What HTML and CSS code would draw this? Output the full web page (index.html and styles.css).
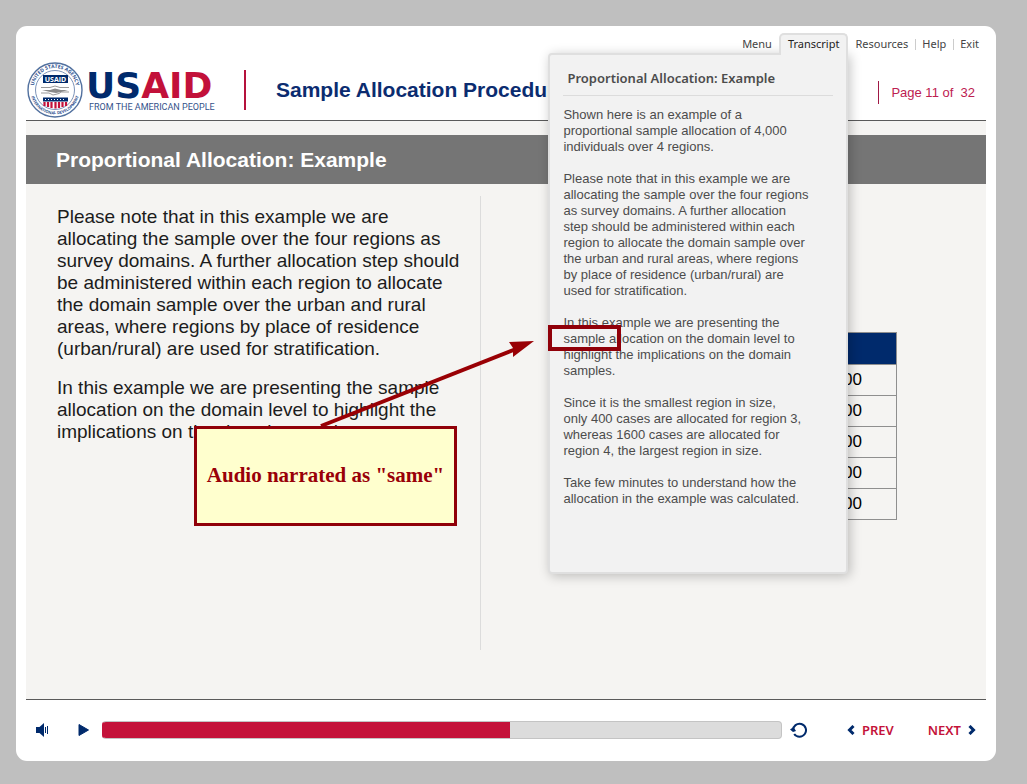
FILE: index.html
```html
<!DOCTYPE html>
<html lang="en">
<head>
<meta charset="utf-8">
<title>Sample Allocation Procedure</title>
<link rel="stylesheet" href="styles.css">
</head>
<body>
<div class="player">
  <header class="header">
    <nav class="nav">
      <button class="nav-item" type="button">Menu</button>
      <div class="tab-wrap">
        <button class="nav-item tab" type="button" aria-expanded="true" aria-controls="transcript">Transcript</button>
        <section class="transcript" id="transcript">
          <h3 class="transcript-title">Proportional Allocation: Example</h3>
          <p>Shown here is an example of a<br>proportional sample allocation of 4,000<br>individuals over 4 regions.</p>
          <p>Please note that in this example we are<br>allocating the sample over the four regions<br>as survey domains. A further allocation<br>step should be administered within each<br>region to allocate the domain sample over<br>the urban and rural areas, where regions<br>by place of residence (urban/rural) are<br>used for stratification.</p>
          <p>In this example we are presenting the<br>sample allocation on the domain level to<br>highlight the implications on the domain<br>samples.</p>
          <p>Since it is the smallest region in size,<br>only 400 cases are allocated for region 3,<br>whereas 1600 cases are allocated for<br>region 4, the largest region in size.</p>
          <p>Take few minutes to understand how the<br>allocation in the example was calculated.</p>
        </section>
      </div>
      <button class="nav-item" type="button">Resources</button>
      <button class="nav-item split" type="button">Help</button>
      <button class="nav-item split" type="button">Exit</button>
    </nav>
    <div class="masthead">
      <svg class="logo" width="190" height="58" viewBox="0 0 190 58" role="img" aria-label="USAID from the American people">
        <defs>
          <path id="ring-top" d="M7.200 33.500A21.400 21.400 0 1 1 48.800 33.500"/>
          <path id="ring-bottom" d="M4 24A24.500 24.500 0 1 0 52 24"/>
        </defs>
        <circle cx="28" cy="29" r="27" fill="#fff" stroke="#52719f" stroke-width="1.4"/>
        <circle cx="28" cy="29" r="19.500" fill="#fff" stroke="#7d93b8" stroke-width="1"/>
        <text class="seal-text"><textPath href="#ring-top" startOffset="50%" text-anchor="middle">UNITED STATES AGENCY</textPath></text>
        <text class="seal-text small"><textPath href="#ring-bottom" startOffset="50%" text-anchor="middle">INTERNATIONAL DEVELOPMENT</textPath></text>
        <rect x="16" y="14" width="25" height="8" fill="#002a6c"/>
        <text class="seal-name" x="28.500" y="20.600" text-anchor="middle">USAID</text>
        <path d="M14 26.500h9l5-1.500 5 1.500h9M14 32h8l4 2 6-1.500 2-1.500h8" fill="none" stroke="#999" stroke-width="1"/>
        <path d="M15 29h8l5-1.500 6 1.500h7l-7 2-5 1-6-1z" fill="#8a8a8a"/>
        <path d="M16 36.500h25v4H16z" fill="#002a6c"/>
        <path d="M18 38.500h21" stroke="#fff" stroke-width="1" stroke-dasharray="1 2"/>
        <path d="M17.500 41v4M21 41v5M24.500 41v6M28.500 41v6.500M32 41v6M35.500 41v5M39 41v4" stroke="#c2113a" stroke-width="2.200"/>
        <text class="word" x="59" y="37"><tspan fill="#002a6c">US</tspan><tspan fill="#c2113a">AID</tspan></text>
        <text class="tagline" x="62" y="49">FROM THE AMERICAN PEOPLE</text>
      </svg>
      <span class="rule"></span>
      <h1 class="course">Sample Allocation Procedure</h1>
      <p class="page-count">Page 11 of&nbsp; 32</p>
    </div>
  </header>

  <main class="stage">
    <h2 class="slide-title">Proportional Allocation: Example</h2>
    <div class="columns">
      <div class="copy">
        <p>Please note that in this example we are<br>allocating the sample over the four regions as<br>survey domains. A further allocation step should<br>be administered within each region to allocate<br>the domain sample over the urban and rural<br>areas, where regions by place of residence<br>(urban/rural) are used for stratification.</p>
        <p>In this example we are presenting the sample<br>allocation on the domain level to highlight the<br>implications on the domain samples.</p>
      </div>
      <div class="figure">
        <table class="sizes">
          <thead><tr><th>Region</th><th>Size</th></tr></thead>
          <tbody>
            <tr><td>1</td><td>1,200</td></tr>
            <tr><td>2</td><td>800</td></tr>
            <tr><td>3</td><td>400</td></tr>
            <tr><td>4</td><td>1,600</td></tr>
            <tr><td>Total</td><td>4,000</td></tr>
          </tbody>
        </table>
      </div>
    </div>
  </main>

  <footer class="controls">
    <button class="icon sound" type="button" aria-label="Sound">
      <svg width="13" height="14" viewBox="0 0 13 14"><path d="M0 4h3.500L8 0v14L3.500 10H0z" fill="#002a6c"/><path d="M9.500 4v6M11.500 3v8" stroke="#002a6c" stroke-width="1"/></svg>
    </button>
    <button class="icon play" type="button" aria-label="Play">
      <svg width="11" height="12" viewBox="0 0 11 12"><path d="M1 .5v11L10.500 6z" fill="#002a6c" stroke="#002a6c" stroke-linejoin="round"/></svg>
    </button>
    <input class="seek" type="range" min="0" max="100" value="60" aria-label="Progress">
    <button class="icon replay" type="button" aria-label="Replay">
      <svg width="17" height="16" viewBox="0 0 17 16"><path d="M3 8.500A6.500 6.500 0 1 1 4.200 12" fill="none" stroke="#002a6c" stroke-width="2"/><path d="M0 7.500l3.500-2.500 2.500 4-3 1z" fill="#002a6c"/></svg>
    </button>
    <button class="step prev" type="button">
      <svg width="8" height="10" viewBox="0 0 8 10"><path d="M6.500 1L2.500 5l4 4" fill="none" stroke="#002a6c" stroke-width="3"/></svg>PREV
    </button>
    <button class="step next" type="button">NEXT
      <svg width="8" height="10" viewBox="0 0 8 10"><path d="M1.500 1l4 4-4 4" fill="none" stroke="#002a6c" stroke-width="3"/></svg>
    </button>
  </footer>

  <div class="notes">
    <svg class="arrow" width="216" height="90" viewBox="0 0 216 90" aria-hidden="true"><path d="M2 87L197 10" stroke="#990005" stroke-width="4"/><path d="M215 2L190 3l4 6 0 9z" fill="#990005"/></svg>
    <div class="marker"></div>
    <div class="callout">Audio narrated as "same"</div>
  </div>
</div>
</body>
</html>
```
FILE: styles.css
```css
* { box-sizing: border-box; }

body {
  margin: 0;
  padding: 26px 31px 23px 16px;
  background: #bfbfbf;
  font-family: "Liberation Sans", Arial, sans-serif;
}

h1, h2, h3, p { margin: 0; }

button {
  padding: 0;
  border: 0;
  background: none;
  font-family: "Noto Sans", sans-serif;
  cursor: pointer;
}

.player {
  position: relative;
  display: flex;
  flex-direction: column;
  min-height: calc(100vh - 49px);
  padding: 0 10px;
  background: #fff;
  border-radius: 11px;
}

/* Header */
.header { border-bottom: 1px solid #5a5a5a; }

.nav {
  display: flex;
  justify-content: flex-end;
  align-items: center;
  height: 28px;
  padding: 8px 7px 0 0;
}

.nav-item {
  color: #444;
  font-size: 11px;
  line-height: 20px;
}

.split {
  margin-left: 7px;
  padding-left: 7px;
  background: linear-gradient(#ccc, #ccc) left center / 1px 11px no-repeat;
}

.tab-wrap {
  position: relative;
  z-index: 5;
  margin: 0 7px;
}

.tab {
  position: relative;
  z-index: 2;
  display: block;
  height: 22px;
  padding: 0 7px 2px;
  background: #f2f2f2;
  border: 2px solid #dfdfdf;
  border-bottom: 0;
  border-radius: 5px 5px 0 0;
  color: #222;
  line-height: 16px;
}

.transcript {
  position: absolute;
  z-index: 1;
  top: 20px;
  right: 0;
  width: 300px;
  min-height: 521px;
  padding: 15px 13px 20px;
  background: #f2f2f2;
  border: 2px solid #dfdfdf;
  border-radius: 4px 0 4px 4px;
  box-shadow: 2px 2px 12px rgba(0, 0, 0, 0.24);
  color: #4c4c4c;
  font-size: 13px;
  line-height: 16px;
}

.transcript p + p { margin-top: 16px; }

.transcript-title {
  margin-bottom: 11px;
  padding: 0 4px 9px;
  border-bottom: 1px solid #dcdcdc;
  font: 600 13px/16px "Noto Sans", sans-serif;
}

.masthead {
  display: flex;
  align-items: center;
  height: 66px;
  padding: 6px 11px 0 0;
}

.logo {
  flex: none;
  margin-left: 1px;
  overflow: visible;
}

.seal-text {
  fill: #2f5290;
  font: 700 5px "Open Sans", sans-serif;
}

.small { font-size: 4px; }

.seal-name {
  fill: #fff;
  font: 700 7px "Open Sans", sans-serif;
}

.word { font: 700 36px "DejaVu Sans", sans-serif; }

.tagline {
  fill: #35528a;
  font: 400 9px Roboto, sans-serif;
}

.rule {
  width: 2px;
  height: 40px;
  margin: 0 30px 0 27px;
  background: #b5123c;
}

.course {
  color: #0b2c70;
  font-size: 21px;
  line-height: 24px;
  white-space: nowrap;
}

.page-count {
  margin: 4px 0 0 auto;
  padding-left: 12px;
  border-left: 1px solid #a01845;
  color: #bd2050;
  font-size: 13px;
  line-height: 23px;
}

/* Slide */
.stage {
  display: flex;
  flex: 1;
  flex-direction: column;
  padding-top: 14px;
  background: #f5f4f2;
}

.slide-title {
  padding: 0 30px;
  background: #757575;
  color: #fff;
  font-size: 21px;
  line-height: 49px;
}

.columns {
  display: flex;
  flex: 1;
  padding: 12px 0 49px;
}

.copy {
  width: 455px;
  padding: 10px 0 0 31px;
  border-right: 1px solid #dcdcdc;
  color: #1c1c1c;
  font-size: 19px;
  line-height: 22px;
  white-space: nowrap;
}

.copy p + p { margin-top: 17px; }

.figure {
  flex: 1;
  padding: 136px 89px 0 120px;
}

.sizes {
  width: 100%;
  border-collapse: collapse;
  font-size: 17px;
  line-height: 20px;
}

.sizes th,
.sizes td {
  height: 31px;
  padding: 0 34px;
  border: 1px solid #8f8f8f;
  text-align: right;
}

.sizes th {
  height: 32px;
  padding-right: 48px;
  background: #002a6c;
  color: #fff;
}

/* Playback controls */
.controls {
  display: flex;
  align-items: center;
  height: 62px;
  padding: 0 10px 1px;
  border-top: 1px solid #5a5a5a;
}

.icon { display: flex; }

.play { margin: 0 12px 0 29px; }

.seek {
  flex: 1;
  height: 18px;
  margin: 0 8px 0 1px;
  appearance: none;
  background: linear-gradient(to right, #c4123a 60%, #dcdcdc 60%);
  border: 1px solid #c4c4c4;
  border-left-color: #c4123a;
  border-radius: 4px;
}

.seek::-webkit-slider-thumb {
  width: 1px;
  height: 16px;
  appearance: none;
  background: transparent;
}

.step {
  display: flex;
  align-items: center;
  gap: 7px;
  color: #c4123a;
  font-size: 13px;
  font-weight: 600;
  line-height: 18px;
}

.prev { margin: 0 34px 0 40px; }

/* Review annotations */
.notes {
  position: absolute;
  z-index: 10;
  inset: 0;
  pointer-events: none;
}

.arrow {
  position: absolute;
  top: 313px;
  left: 303px;
}

.marker {
  position: absolute;
  top: 299px;
  left: 532px;
  width: 73px;
  height: 26px;
  border: 4px solid #900009;
}

.callout {
  position: absolute;
  top: 400px;
  left: 178px;
  width: 263px;
  height: 100px;
  border: 3px solid #900009;
  background: #ffffce;
  color: #990008;
  font: 700 21px/92px "Liberation Serif", serif;
  text-align: center;
  white-space: nowrap;
}
```
